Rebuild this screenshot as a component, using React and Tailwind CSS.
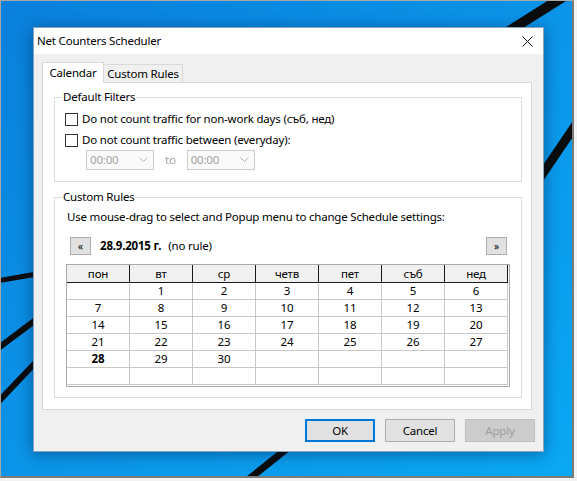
import React from 'react';

const heads = ['пон', 'вт', 'ср', 'четв', 'пет', 'съб', 'нед'];
const weeks = [
  ['', '1', '2', '3', '4', '5', '6'],
  ['7', '8', '9', '10', '11', '12', '13'],
  ['14', '15', '16', '17', '18', '19', '20'],
  ['21', '22', '23', '24', '25', '26', '27'],
  ['28', '29', '30', '', '', '', ''],
  ['', '', '', '', '', '', ''],
];

function Wallpaper() {
  // dark gaps of the win10 light beams
  return (
    <svg className="absolute inset-0" width="574" height="478" viewBox="0 0 574 478">
      <g stroke="#0a0d0c" strokeLinecap="butt" fill="none">
        <line x1="497" y1="37" x2="562" y2="-4" strokeWidth="10" />
        <line x1="538" y1="178" x2="580" y2="116" strokeWidth="9" />
        <line x1="-4" y1="280" x2="36" y2="273" strokeWidth="5" />
        <line x1="-4" y1="348" x2="36" y2="318" strokeWidth="6" />
        <line x1="-4" y1="402" x2="36" y2="360" strokeWidth="6" />
        <line x1="243" y1="482" x2="288" y2="446" strokeWidth="7" />
      </g>
    </svg>
  );
}

function Checkbox({ label }) {
  return (
    <div className="flex items-center h-[16px]">
      <div className="w-[13px] h-[13px] border border-[#333333] bg-white" />
      <span className="ml-[4px] leading-[16px]">{label}</span>
    </div>
  );
}

function TimeCombo() {
  return (
    <div className="w-[68px] h-[20px] border border-[#cccccc] bg-[#fafafa] flex items-center justify-between pl-[3px] pr-[5px] text-[#a3a3a3]">
      <span>00:00</span>
      <svg width="9" height="6" viewBox="0 0 9 6">
        <polyline points="0.5,0.5 4.5,4.5 8.5,0.5" fill="none" stroke="#b5b5b5" strokeWidth="1" />
      </svg>
    </div>
  );
}

function NavButton({ children }) {
  return (
    <div className="w-[21px] h-[18px] border border-[#adadad] bg-[#e1e1e1] flex items-center justify-center text-[10px] leading-none">
      {children}
    </div>
  );
}

function Calendar() {
  return (
    <div className="w-fit border border-[#a9a9a9] pr-px pb-px bg-white">
      <div className="grid grid-cols-[repeat(7,63px)]">
        {heads.map((h) => (
          <div key={h} className="h-[18px] bg-[#f0f0f0] border-r border-b border-[#1a1a1a] flex items-center justify-center leading-none">
            {h}
          </div>
        ))}
        {weeks.flat().map((d, i) => (
          <div
            key={i}
            className={
              'h-[17px] border-r border-b border-[#c8c8c8] flex items-center justify-center leading-none ' +
              (d === '28' ? 'font-bold' : '')
            }
          >
            {d}
          </div>
        ))}
      </div>
    </div>
  );
}

function DialogButton({ children, variant }) {
  const styles = {
    ok: 'border-2 border-[#0078d7] bg-[#e1e1e1] text-black',
    normal: 'border border-[#adadad] bg-[#e1e1e1] text-black',
    disabled: 'border border-[#bfbfbf] bg-[#cccccc] text-[#9d9d9d]',
  };
  return (
    <div className={'w-[70px] h-[23px] flex items-center justify-center ' + styles[variant]}>
      {children}
    </div>
  );
}

export default function App() {
  return (
    <div className="w-[577px] h-[481px] bg-[#f3f3f3] overflow-hidden font-['Noto_Sans',sans-serif] text-[11.5px] tracking-[-0.2px] text-black">
      {/* desktop */}
      <div className="relative w-[574px] h-[478px] border-t border-l border-[#a8a8a8] border-r-2 border-b-2 border-r-[#7a7a7a] border-b-[#7a7a7a] bg-gradient-to-br from-[#0a80db] via-[#0b94e8] to-[#0aa8f4] overflow-hidden">
        <Wallpaper />

        {/* dialog window */}
        <div className="relative ml-[32px] mt-[26px] w-[511px] h-[425px] border border-[#8aa4bd] bg-[#f0f0f0] flex flex-col shadow-[0_2px_14px_rgba(0,20,60,0.45)]">
          {/* title bar */}
          <div className="h-[26px] bg-white flex items-center justify-between pl-[3px] pr-[10px]">
            <span className="leading-none">Net Counters Scheduler</span>
            <svg width="11" height="11" viewBox="0 0 11 11">
              <path d="M0.5 0.5 L10.5 10.5 M10.5 0.5 L0.5 10.5" stroke="#111" strokeWidth="1" />
            </svg>
          </div>

          {/* body */}
          <div className="flex-1 pt-[8px] pl-[8px] flex flex-col">
            {/* tabs */}
            <div className="flex items-end h-[20px]">
              <div className="relative z-10 w-[62px] h-[21px] -mb-px bg-white border border-b-0 border-[#d9d9d9] flex items-center justify-center">
                Calendar
              </div>
              <div className="w-[80px] h-[18px] -ml-px bg-[#f0f0f0] border border-b-0 border-[#d9d9d9] flex items-center justify-center">
                Custom Rules
              </div>
            </div>

            {/* tab panel */}
            <div className="w-[490px] h-[328px] bg-white border border-[#d9d9d9] pl-[11px] pt-[6px]">
              <fieldset className="w-[468px] h-[93px] border border-[#dcdcdc] px-[10px]">
                <legend className="ml-[-3px] px-[1px] leading-[16px]">Default Filters</legend>
                <div className="pt-[6px] flex flex-col gap-[5px]">
                  <Checkbox label="Do not count traffic for non-work days (съб, нед)" />
                  <Checkbox label="Do not count traffic between (everyday):" />
                </div>
                <div className="mt-[2px] ml-[21px] flex items-center">
                  <TimeCombo />
                  <span className="mx-[11px] text-[#a3a3a3]">to</span>
                  <TimeCombo />
                </div>
              </fieldset>

              <fieldset className="mt-[7px] w-[468px] h-[209px] border border-[#dcdcdc] px-[11px]">
                <legend className="ml-[-4px] px-[1px] leading-[16px]">Custom Rules</legend>
                <div className="pt-[4px] pl-px leading-[16px]">
                  Use mouse-drag to select and Popup menu to change Schedule settings:
                </div>
                <div className="mt-[12px] pl-[4px] pr-[3px] flex items-center">
                  <NavButton>«</NavButton>
                  <span className="ml-[9px] font-bold">28.9.2015 г.</span>
                  <span className="ml-[7px]">(no rule)</span>
                  <div className="ml-auto">
                    <NavButton>»</NavButton>
                  </div>
                </div>
                <div className="mt-[9px]">
                  <Calendar />
                </div>
              </fieldset>
            </div>

            {/* buttons */}
            <div className="mt-[9px] pr-[8px] flex justify-end gap-[10px]">
              <DialogButton variant="ok">OK</DialogButton>
              <DialogButton variant="normal">Cancel</DialogButton>
              <DialogButton variant="disabled">Apply</DialogButton>
            </div>
          </div>
        </div>
      </div>
    </div>
  );
}
